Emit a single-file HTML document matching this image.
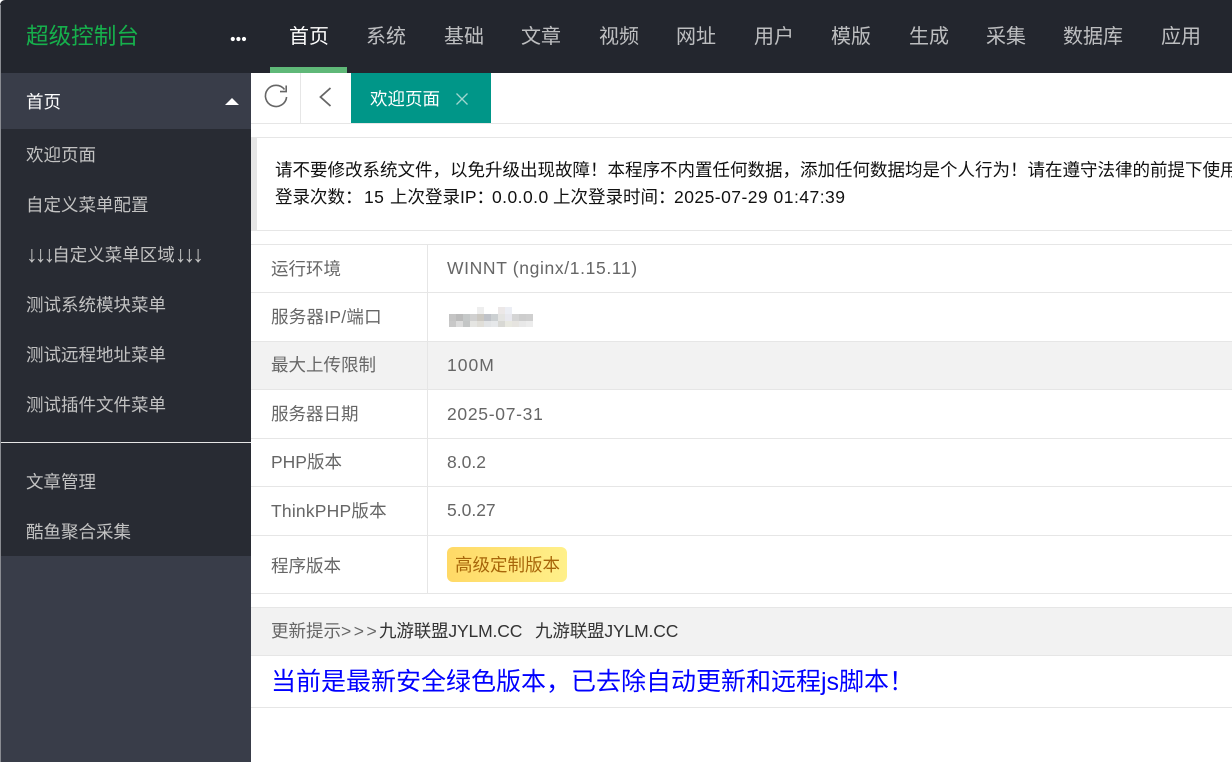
<!DOCTYPE html>
<html lang="zh"><head><meta charset="utf-8"><title>超级控制台</title>
<style>
html,body{margin:0;padding:0;width:1232px;height:762px;overflow:hidden;background:#fff}
body{position:relative;font-family:"Liberation Sans","Noto Sans CJK SC",sans-serif;font-size:17.5px;color:#666}
.a{position:absolute;white-space:nowrap}
.t{position:absolute;white-space:pre;line-height:26px}
.n{top:24px;font-size:20px;color:rgba(255,255,255,.7)}
.s{left:26px;color:#c2c2c2}
.l{left:271px}
.v{left:447px}
.k{color:#111}
.ar{font-size:23px;letter-spacing:-2.75px;line-height:0;vertical-align:-1px}
.h{position:absolute;left:251px;right:0;height:1px;background:#e6e6e6}
</style></head><body>
<div class="a" style="left:0;top:0;width:1232px;height:73px;background:#23262e;border-top-left-radius:5px"></div>
<div class="a" style="left:0;top:73px;width:251px;height:689px;background:#393d49"></div>
<div class="a" style="left:0;top:129px;width:251px;height:427px;background:#282b33"></div>
<div class="a" style="left:1px;top:442px;width:250px;height:1px;background:#e6e6e6"></div>
<div class="a" style="left:0;top:5px;width:1px;height:757px;background:#8a8c92"></div>

<div class="t" style="left:26px;top:24px;font-size:22.6px;color:#16b04c">超级控制台</div>
<svg class="a" style="left:230px;top:36px" width="17" height="6"><circle cx="2.8" cy="3" r="2.1" fill="#fff"/><circle cx="8.4" cy="3" r="2.1" fill="#fff"/><circle cx="14" cy="3" r="2.1" fill="#fff"/></svg>
<div class="t n" style="left:289px;color:#fff">首页</div>
<div class="t n" style="left:366px">系统</div>
<div class="t n" style="left:444px">基础</div>
<div class="t n" style="left:521px">文章</div>
<div class="t n" style="left:599px">视频</div>
<div class="t n" style="left:676px">网址</div>
<div class="t n" style="left:754px">用户</div>
<div class="t n" style="left:831px">模版</div>
<div class="t n" style="left:909px">生成</div>
<div class="t n" style="left:986px">采集</div>
<div class="t n" style="left:1063px">数据库</div>
<div class="t n" style="left:1161px">应用</div>
<div class="a" style="left:270px;top:67px;width:77px;height:6px;background:#5fb878"></div>

<div class="t" style="left:26px;top:89px;color:#fff">首页</div>
<svg class="a" style="left:225px;top:97px" width="15" height="9"><path d="M0 8 L7 1 L14 8Z" fill="#fff"/></svg>
<div class="t s" style="top:142px">欢迎页面</div>
<div class="t s" style="top:192px">自定义菜单配置</div>
<div class="t s" style="top:242px"><span class="ar">↓↓↓</span>自定义菜单区域<span class="ar">↓↓↓</span></div>
<div class="t s" style="top:292px">测试系统模块菜单</div>
<div class="t s" style="top:342px">测试远程地址菜单</div>
<div class="t s" style="top:392px">测试插件文件菜单</div>
<div class="t s" style="top:469px">文章管理</div>
<div class="t s" style="top:519px">酷鱼聚合采集</div>

<div class="h" style="top:123px"></div>
<div class="a" style="left:300px;top:73px;width:1px;height:50px;background:#e6e6e6"></div>
<svg class="a" style="left:263px;top:84px" width="26" height="26" fill="none" stroke="#666" stroke-width="1.6"><path d="M21.5 5.5 A10.6 10.6 0 1 0 23.6 13"/><path d="M23.2 1.5 V7.6 H17"/></svg>
<svg class="a" style="left:318px;top:86px" width="16" height="22" fill="none" stroke="#666" stroke-width="1.8"><path d="M12.5 2 L2.5 11 L12.5 20"/></svg>
<div class="a" style="left:351px;top:73px;width:140px;height:50px;background:#009688"></div>
<div class="t" style="left:370px;top:86px;color:#fff">欢迎页面</div>
<svg class="a" style="left:455px;top:92px" width="14" height="14" stroke="#9fd6cf" stroke-width="1.3"><path d="M1.5 1.5 L12.5 12.5 M12.5 1.5 L1.5 12.5"/></svg>

<div class="h" style="top:137px"></div>
<div class="h" style="top:230px"></div>
<div class="a" style="left:251px;top:138px;width:6px;height:92px;background:#e6e6e6"></div>
<div class="t k" style="left:275px;top:157px">请不要修改系统文件，以免升级出现故障！本程序不内置任何数据，添加任何数据均是个人行为！请在遵守法律的前提下使用</div>
<div class="t k" style="left:275px;top:184px">登录次数：</div>
<div class="t k" style="left:364px;top:184px;letter-spacing:.4px">15</div>
<div class="t k" style="left:390px;top:184px">上次登录IP：</div>
<div class="t k" style="left:492px;top:184px;letter-spacing:.45px">0.0.0.0</div>
<div class="t k" style="left:553px;top:184px">上次登录时间：</div>
<div class="t k" style="left:674px;top:184px;letter-spacing:.47px">2025-07-29 01:47:39</div>

<div class="a" style="left:251px;top:342px;right:0;height:47px;background:#f2f2f2"></div>
<div class="h" style="top:244px"></div>
<div class="h" style="top:292px"></div>
<div class="h" style="top:341px"></div>
<div class="h" style="top:389px"></div>
<div class="h" style="top:438px"></div>
<div class="h" style="top:486px"></div>
<div class="h" style="top:535px"></div>
<div class="h" style="top:593px"></div>
<div class="a" style="left:427px;top:244px;width:1px;height:349px;background:#e6e6e6"></div>

<div class="t l" style="top:256px">运行环境</div>
<div class="t v" style="top:255px;letter-spacing:.64px">WINNT (nginx/1.15.11)</div>
<div class="t l" style="top:304px;letter-spacing:.25px">服务器IP/端口</div>
<svg class="a" style="left:449px;top:307px" width="84" height="21" shape-rendering="crispEdges">
<rect x="28" y="0" width="7" height="7" fill="#eee"/><rect x="49" y="0" width="7" height="7" fill="#ece8e8"/><rect x="56" y="0" width="7" height="7" fill="#eceef4"/>
<rect x="0" y="7" width="7" height="7" fill="#c4c4c4"/><rect x="7" y="7" width="7" height="7" fill="#bbb"/><rect x="14" y="7" width="7" height="7" fill="#c5c8c8"/><rect x="21" y="7" width="7" height="7" fill="#d0d0d0"/><rect x="28" y="7" width="7" height="7" fill="#cbc8c2"/><rect x="35" y="7" width="7" height="7" fill="#bfc2c8"/><rect x="42" y="7" width="7" height="7" fill="#ccd0d2"/><rect x="49" y="7" width="7" height="7" fill="#e4e4e2"/><rect x="56" y="7" width="7" height="7" fill="#e8e8ee"/><rect x="63" y="7" width="7" height="7" fill="#d5d5d5"/><rect x="70" y="7" width="7" height="7" fill="#cdcdcd"/><rect x="77" y="7" width="7" height="7" fill="#cfcfcf"/>
<rect x="0" y="14" width="7" height="6" fill="#c8c8c8"/><rect x="7" y="14" width="7" height="6" fill="#dcdcdc"/><rect x="14" y="14" width="7" height="6" fill="#c4c6c6"/><rect x="21" y="14" width="7" height="6" fill="#e5e5e2"/><rect x="28" y="14" width="7" height="6" fill="#e0ded8"/><rect x="35" y="14" width="7" height="6" fill="#e2e4e6"/><rect x="42" y="14" width="7" height="6" fill="#e6e8ea"/><rect x="49" y="14" width="7" height="6" fill="#d8d8d4"/><rect x="56" y="14" width="7" height="6" fill="#e8e8e0"/><rect x="63" y="14" width="7" height="6" fill="#e6e4e0"/><rect x="70" y="14" width="7" height="6" fill="#e8e8e8"/><rect x="77" y="14" width="7" height="6" fill="#ececec"/>
</svg>
<div class="t l" style="top:352px">最大上传限制</div>
<div class="t v" style="top:352px;letter-spacing:1px">100M</div>
<div class="t l" style="top:401px">服务器日期</div>
<div class="t v" style="top:401px;letter-spacing:.7px">2025-07-31</div>
<div class="t l" style="top:449px">PHP版本</div>
<div class="t v" style="top:449px">8.0.2</div>
<div class="t l" style="top:498px;letter-spacing:.2px">ThinkPHP版本</div>
<div class="t v" style="top:497px">5.0.27</div>
<div class="t l" style="top:553px">程序版本</div>
<div class="a" style="left:447px;top:547px;width:120px;height:35px;border-radius:6px;background:linear-gradient(90deg,#ffd966,#fff08a)"></div>
<div class="t" style="left:455px;top:552px;color:#a8660a">高级定制版本</div>

<div class="a" style="left:251px;top:607px;right:0;height:48px;background:#f2f2f2"></div>
<div class="h" style="top:607px"></div>
<div class="h" style="top:655px"></div>
<div class="t" style="left:271px;top:618px">更新提示<span style="letter-spacing:2.5px">&gt;&gt;&gt;</span></div>
<div class="t" style="left:379px;top:618px;color:#333;letter-spacing:-.15px">九游联盟JYLM.CC</div>
<div class="t" style="left:535px;top:618px;color:#333;letter-spacing:-.15px">九游联盟JYLM.CC</div>
<div class="t" style="left:271px;top:669px;font-size:25px;color:#00f">当前是最新安全绿色版本，已去除自动更新和远程js脚本！</div>
<div class="h" style="top:707px"></div>
</body></html>
